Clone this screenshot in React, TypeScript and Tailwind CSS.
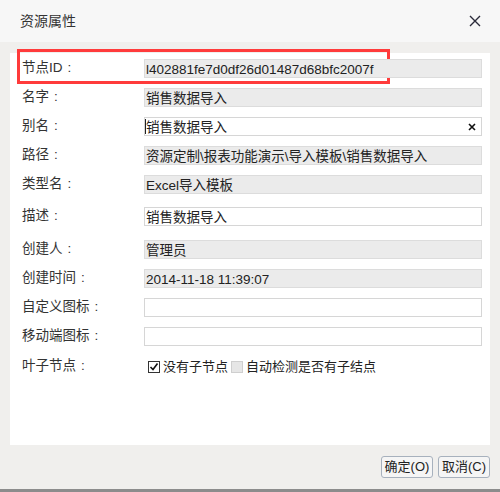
const font = { fontFamily: '"Liberation Sans", "Noto Sans CJK SC", sans-serif' };

type Row = {
  label: string;
  value?: string;
  readOnly?: boolean;
  clear?: boolean;
  caret?: boolean;
  mt: string;
};

const rows: Row[] = [
  { label: "节点ID", value: "l402881fe7d0df26d01487d68bfc2007f", readOnly: true, mt: "mt-0" },
  { label: "名字", value: "销售数据导入", readOnly: true, mt: "mt-[10px]" },
  { label: "别名", value: "销售数据导入", clear: true, caret: true, mt: "mt-[10px]" },
  { label: "路径", value: "资源定制\\报表功能演示\\导入模板\\销售数据导入", readOnly: true, mt: "mt-[10px]" },
  { label: "类型名", value: "Excel导入模板", readOnly: true, mt: "mt-[10px]" },
  { label: "描述", value: "销售数据导入", mt: "mt-[13px]" },
  { label: "创建人", value: "管理员", readOnly: true, mt: "mt-[14px]" },
  { label: "创建时间", value: "2014-11-18 11:39:07", readOnly: true, mt: "mt-[10px]" },
  { label: "自定义图标", value: "", mt: "mt-[10px]" },
  { label: "移动端图标", value: "", mt: "mt-[10px]" },
];

function Label({ text }: { text: string }) {
  return (
    <div className="flex w-[122px] items-center text-[13.5px] text-[#333]">
      <span>{text}</span>
      <span className="w-[14px] text-center">:</span>
    </div>
  );
}

function Field({ row }: { row: Row }) {
  return (
    <div className={`flex h-[19px] items-center ${row.mt}`}>
      <Label text={row.label} />
      <div
        className={`relative flex h-[19px] w-[338px] items-center border text-[13.5px] text-[#222] ${
          row.readOnly ? "border-[#dcdcdc] bg-[#ebebeb]" : "border-[#d6d6d6] bg-white"
        } ${row.caret ? "pl-0" : "pl-[1px]"}`}
      >
        {row.caret && <span className="h-[15px] w-px bg-[#222]" />}
        <span className="whitespace-nowrap pt-[2px] leading-[17px]">{row.value}</span>
        {row.clear && (
          <svg className="absolute right-[5px] top-[5px] h-[8px] w-[8px]" viewBox="0 0 8 8" aria-hidden>
            <path d="M1 1L7 7M7 1L1 7" stroke="#111" strokeWidth="1.6" />
          </svg>
        )}
      </div>
    </div>
  );
}

export default function App() {
  return (
    <div className="flex h-[492px] w-[500px] flex-col bg-[#f0efed]" style={font}>
      <div className="flex h-[42px] items-center justify-between bg-[#f7f7f7] pl-5 pr-[19px]">
        <span className="text-[14px] text-[#333]">资源属性</span>
        <svg className="h-[12px] w-[12px]" viewBox="0 0 12 12" aria-hidden>
          <path d="M1 1L11 11M11 1L1 11" stroke="#2b2b3a" strokeWidth="1.4" />
        </svg>
      </div>

      <div className="px-[10px] pt-[11px]">
        <div className="relative h-[392px] bg-white pl-[12px] pr-[8px] pt-[6px]">
          <div className="pointer-events-none absolute left-[7px] top-[-4px] h-[35px] w-[373px] border-[3px] border-[#ff3b3b]" />
          {rows.map((row) => (
            <Field key={row.label} row={row} />
          ))}
          <div className="mt-[11px] flex h-[19px] items-center">
            <Label text="叶子节点" />
            <div className="ml-[4px] flex items-center gap-[3px] text-[13px] text-[#222]">
              <span className="flex h-[12px] w-[12px] items-center justify-center border border-[#333] bg-white">
                <svg className="h-[10px] w-[10px]" viewBox="0 0 10 10" aria-hidden>
                  <path d="M1.5 5L4 7.5L8.5 1.5" stroke="#111" strokeWidth="1.6" fill="none" />
                </svg>
              </span>
              <span>没有子节点</span>
              <span className="h-[12px] w-[12px] border border-[#cfcfcf] bg-[#e6e6e6]" />
              <span>自动检测是否有子结点</span>
            </div>
          </div>
        </div>
      </div>

      <div className="flex flex-1 items-center justify-end gap-[5px] pr-[10px]">
        <button className="h-[22px] w-[52px] rounded-[3px] border border-[#a7b1bd] bg-[#f5f5f5] text-[13px] text-[#222]">
          确定(O)
        </button>
        <button className="h-[22px] w-[52px] rounded-[3px] border border-[#a7b1bd] bg-[#f5f5f5] text-[13px] text-[#222]">
          取消(C)
        </button>
      </div>
      <div className="h-[3px] bg-[#8c8c8c]" />
    </div>
  );
}
